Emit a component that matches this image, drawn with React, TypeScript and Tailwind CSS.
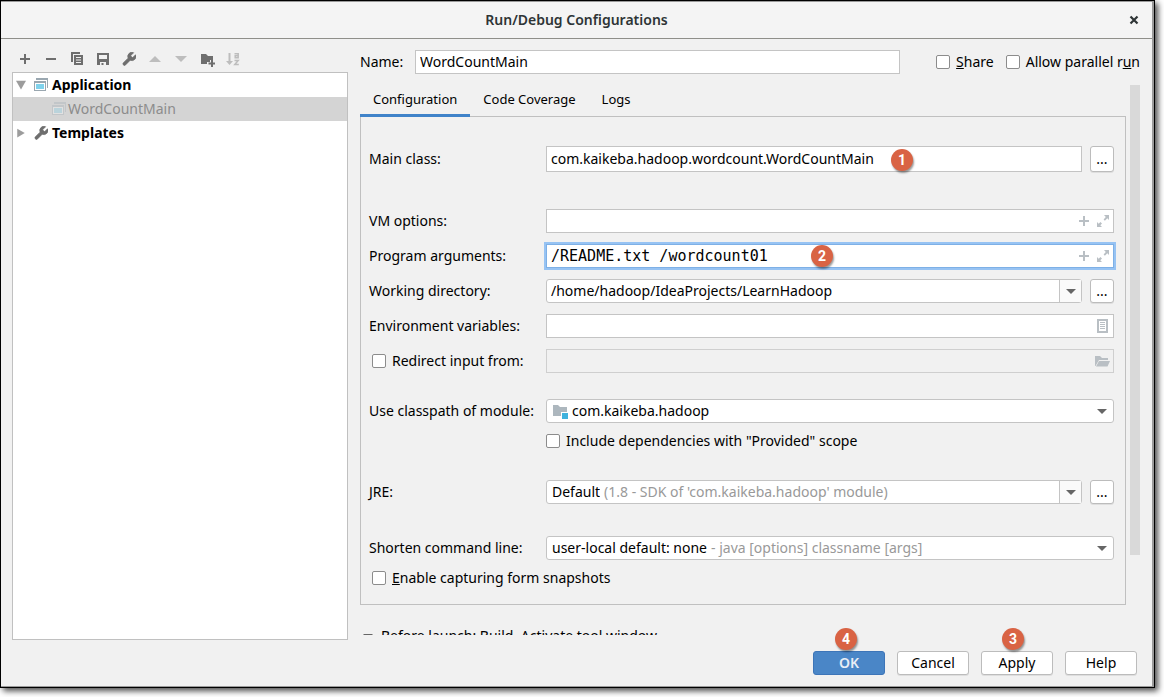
import type { ReactNode } from "react";

const inputBox = "border border-[#c4c4c4] bg-white";

function Svg({ children, className = "size-4" }: { children: ReactNode; className?: string }) {
  return (
    <svg viewBox="0 0 16 16" aria-hidden="true" className={`shrink-0 ${className}`} fill="currentColor">
      {children}
    </svg>
  );
}

const PlusIcon = ({ className = "size-4" }: { className?: string }) => (
  <Svg className={className}>
    <path d="M7 3h2v4h4v2H9v4H7V9H3V7h4z" />
  </Svg>
);

const Wrench = () => (
  <svg viewBox="1.5 1.5 20.5 20.5" aria-hidden="true" className="size-4 shrink-0 p-px text-[#6e6e6e]" fill="currentColor">
    <path d="M14.7 6.3a1 1 0 0 0 0 1.4l1.6 1.6a1 1 0 0 0 1.4 0l3.77-3.77a6 6 0 0 1-7.94 7.94l-6.91 6.91a2.12 2.12 0 0 1-3-3l6.91-6.91a6 6 0 0 1 7.94-7.94l-3.76 3.76z" stroke="currentColor" strokeWidth="1.2" />
  </svg>
);

const ExpandIcon = () => (
  <Svg className="size-4 text-[#b9bfc4]">
    <path d="M9 2h5v5l-1.700-1.700-2.400 2.400-1.300-1.300 2.200-2.400z M2 9v5h5l-1.700-1.700 1.700-1.700L5.400 9 3.700 10.700z" />
  </Svg>
);

const AppIcon = ({ faded = false }: { faded?: boolean }) => (
  <Svg className={faded ? "size-4 opacity-30" : "size-4"}>
    <path d="M3 1h12v10h-1V3H3z" fill="#9aa7b0" />
    <path d="M1 4h12v10H1zM2 6v7h10V6z" fill="#9aa7b0" fillRule="evenodd" />
    <path d="M2 6h10v7H2z" fill="#fff" />
    <path d="M3 7h8v5H3z" fill="#7fd2ec" />
  </Svg>
);

function Badge({ n, className }: { n: number; className: string }) {
  return (
    <span
      className={`pointer-events-none absolute z-10 flex size-[22px] items-center justify-center rounded-full bg-[#d96344] font-[Roboto,sans-serif] text-sm font-bold text-white shadow-[1px_2px_2px_rgba(0,0,0,0.4)] ${className}`}
    >
      {n}
    </span>
  );
}

function Check({ id, children }: { id: string; children: ReactNode }) {
  return (
    <div className="flex items-center gap-1.5">
      <input
        id={id}
        type="checkbox"
        className="size-3.5 shrink-0 appearance-none rounded-xs border border-[#8c8c8c] bg-white checked:bg-[#4a86c7]"
      />
      <label htmlFor={id}>{children}</label>
    </div>
  );
}

function Row({ id, label, className = "", children }: { id: string; label: ReactNode; className?: string; children: ReactNode }) {
  return (
    <div className={`flex items-center ${className}`}>
      <div className="w-[177px] shrink-0 whitespace-nowrap">
        {typeof label === "string" ? <label htmlFor={id}>{label}</label> : label}
      </div>
      <div className="flex min-w-0 flex-1 items-stretch gap-2">{children}</div>
    </div>
  );
}

function Browse({ label }: { label: string }) {
  return (
    <button
      type="button"
      aria-label={label}
      className="w-6 shrink-0 rounded-[3px] border border-[#bcbcbc] bg-white shadow-[0_1px_0_rgba(0,0,0,0.08)]"
    >
      ...
    </button>
  );
}

const Caret = () => (
  <svg viewBox="0 0 10 5" aria-hidden="true" className="h-[5px] w-2.5 shrink-0" fill="#666">
    <path d="M0 0h10L5 5z" />
  </svg>
);

function ArgInput({ id, value, focused = false }: { id: string; value?: string; focused?: boolean }) {
  return (
    <div
      className={`relative flex h-6 flex-1 items-center gap-[3px] border pr-0.5 pl-1 bg-white ${
        focused ? "border-[#7eb0e6] outline-2 outline-[#97c3f3]" : "border-[#c4c4c4]"
      }`}
    >
      <input id={id} defaultValue={value} className="min-w-0 flex-1 font-[DejaVu_Sans_Mono,monospace] text-[15px] outline-none" />
      <button type="button" aria-label="Insert macro"><PlusIcon className="size-4 text-[#b9bfc4]" /></button>
      <button type="button" aria-label="Expand"><ExpandIcon /></button>
      {focused && <Badge n={2} className="top-0 left-[264px]" />}
    </div>
  );
}

function Choice({ id, main, note, icon, split = false }: { id: string; main: string; note?: string; icon?: ReactNode; split?: boolean }) {
  return (
    <div className="flex h-6 min-w-0 flex-1 items-stretch rounded-[3px] border border-[#c4c4c4] bg-white">
      <div className="flex min-w-0 flex-1 items-center gap-1 pl-[5px]">
        {icon}
        <select id={id} className="appearance-none [field-sizing:content]">
          <option>{main}</option>
        </select>
        {note && <span className="whitespace-nowrap text-[#999]">{note}</span>}
      </div>
      <div className={`flex w-[22px] items-center justify-center ${split ? "border-l border-[#c4c4c4] bg-[#fafafa]" : ""}`}>
        <Caret />
      </div>
    </div>
  );
}

function Toolbar() {
  const tools: { name: string; off?: boolean; icon: ReactNode }[] = [
    { name: "Add", icon: <PlusIcon /> },
    { name: "Remove", icon: <Svg><path d="M3 7h10v2H3z" /></Svg> },
    {
      name: "Copy",
      icon: (
        <Svg>
          <path d="M2 1h9v2H4v8H2z" />
          <path fillRule="evenodd" d="M5 4h9v10H5zM7 6v1h5V6zM7 8.500v1h5v-1zM7 11v1h5v-1z" />
        </Svg>
      ),
    },
    { name: "Save", icon: <Svg><path fillRule="evenodd" d="M2 2h12v12H2zM4 4v4h8V4zM5 11v3h1.500v-2h2v2H11v-3z" /></Svg> },
    { name: "Edit templates", icon: <Wrench /> },
    { name: "Move up", off: true, icon: <Svg><path d="M2 11h12L8 5z" /></Svg> },
    { name: "Move down", off: true, icon: <Svg><path d="M2 5h12l-6 6z" /></Svg> },
    {
      name: "New folder",
      icon: (
        <Svg>
          <path d="M2 3h5l2 2h5v4h-3v2H8v2H2z" />
          <path d="M12 9h2v2.500h2v2h-2V16h-2v-2.500H9.500v-2H12z" />
        </Svg>
      ),
    },
    {
      name: "Sort",
      off: true,
      icon: (
        <Svg>
          <path d="M3.500 2h2v8H8l-3.500 4L1 10h2.500z" />
          <path d="M9.500 2.700h3.700v4.100h-3v-2.100h3M9.500 9.500h3.700l-3.400 4h4" fill="none" stroke="currentColor" strokeWidth="1.500" />
        </Svg>
      ),
    },
  ];
  return (
    <div className="flex h-[21px] items-start gap-2.5 pl-[5px]">
      {tools.map((t) => (
        <button key={t.name} type="button" aria-label={t.name} disabled={t.off} className={t.off ? "text-[#bdbdbd]" : "text-[#6e6e6e]"}>
          {t.icon}
        </button>
      ))}
    </div>
  );
}

function Tree() {
  return (
    <ul role="tree" aria-label="Configurations" className="flex-1 border border-[#c0c0c0] bg-white">
      <li role="treeitem" className="flex h-6 items-center gap-1 pl-[3px] font-bold">
        <Svg className="size-2.5 text-[#9c9c9c]"><path d="M0 1h16L8 15z" /></Svg>
        <span className="pl-[3px]"><AppIcon /></span>
        <span className="-ml-px">Application</span>
      </li>
      <li role="treeitem" aria-selected="true" className="flex h-6 items-center gap-px bg-[#d4d4d4] pl-[38px] text-[#8c8c8c]">
        <AppIcon faded />
        <span>WordCountMain</span>
      </li>
      <li role="treeitem" className="flex h-6 items-center gap-1 pl-[3px] font-bold">
        <Svg className="size-2.5 text-[#9c9c9c]"><path d="M2 1v14l12-7z" /></Svg>
        <span className="pl-[3px]"><Wrench /></span>
        <span className="-ml-px">Templates</span>
      </li>
    </ul>
  );
}

function ConfigurationForm() {
  return (
    <div className="border border-[#c0c0c0] pt-[29px] pr-[11px] pb-4 pl-2">
      <Row id="main-class" label="Main class:">
        <div className="relative flex flex-1">
          <input id="main-class" defaultValue="com.kaikeba.hadoop.wordcount.WordCountMain" className={`h-[26px] min-w-0 flex-1 px-1 pb-0.5 ${inputBox}`} />
          <Badge n={1} className="top-[3px] left-[345px]" />
        </div>
        <Browse label="Browse main class" />
      </Row>
      <Row id="vm" label="VM options:" className="mt-[37px]"><ArgInput id="vm" /></Row>
      <Row id="args" label="Program arguments:" className="mt-[11px]">
        <ArgInput id="args" value="/README.txt /wordcount01" focused />
      </Row>
      <Row id="dir" label="Working directory:" className="mt-[11px]">
        <div className="flex h-6 flex-1 rounded-[3px] border border-[#c4c4c4] bg-white">
          <input id="dir" defaultValue="/home/hadoop/IdeaProjects/LearnHadoop" className="min-w-0 flex-1 px-1" />
          <button type="button" aria-label="Recent directories" className="flex w-[22px] items-center justify-center border-l border-[#c4c4c4] bg-[#fafafa]">
            <Caret />
          </button>
        </div>
        <Browse label="Browse directory" />
      </Row>
      <Row id="env" label="Environment variables:" className="mt-[11px]">
        <div className={`flex h-6 flex-1 items-center px-[3px] ${inputBox}`}>
          <input id="env" className="min-w-0 flex-1" />
          <button type="button" aria-label="Edit variables">
            <Svg className="size-4 text-[#b9bfc4]">
              <path fillRule="evenodd" d="M3 1h11v14H3zM5 3v10h7V3z" />
              <path d="M6 4h5v1H6zM6 6h5v1H6zM6 8h5v1H6zM6 10h5v1H6z" />
            </Svg>
          </button>
        </div>
      </Row>
      <Row id="redirect-path" label={<div className="pl-[3px]"><Check id="redirect">Redirect input from:</Check></div>} className="mt-[11px]">
        <div className="flex h-6 flex-1 items-center border border-[#cfcfcf] px-[3px]">
          <input id="redirect-path" aria-label="Input file" disabled className="min-w-0 flex-1" />
          <button type="button" aria-label="Browse input file" disabled>
            <Svg className="size-4 text-[#b9bfc4]"><path d="M1 3h5l2 2h6v2H5l-3.500 6H1z" /><path d="M5 8h11l-2.500 5.500H2z" /></Svg>
          </button>
        </div>
      </Row>
      <Row id="module" label="Use classpath of module:" className="mt-[26px]">
        <Choice
          id="module"
          main="com.kaikeba.hadoop"
          icon={
            <Svg>
              <path d="M1 2h5l2 2h7v5H9v4H1z" fill="#adb7be" />
              <path d="M10 10h6v6h-6z" fill="#3fb2dd" />
            </Svg>
          }
        />
      </Row>
      <div className="mt-2 pl-[177px]">
        <Check id="provided">Include dependencies with "Provided" scope</Check>
      </div>
      <Row id="jre" label="JRE:" className="mt-[29px]">
        <Choice id="jre" main="Default" note="(1.8 - SDK of 'com.kaikeba.hadoop' module)" split />
        <Browse label="Browse JRE" />
      </Row>
      <Row id="shorten" label="Shorten command line:" className="mt-8">
        <Choice id="shorten" main="user-local default: none" note="- java [options] classname [args]" />
      </Row>
      <div className="mt-2 pl-[3px]">
        <Check id="snapshots"><u>E</u>nable capturing form snapshots</Check>
      </div>
    </div>
  );
}

export default function App() {
  const button = "relative h-6 w-[72px] rounded-[3px] border";
  const plain = "border-[#bcbcbc] bg-white shadow-[0_1px_0_rgba(0,0,0,0.08)]";
  return (
    <div className="flex h-screen bg-white pr-[9px] pb-[9px] font-[Noto_Sans,sans-serif] text-sm leading-5 text-black">
      <main className="flex min-w-0 flex-1 flex-col border border-black bg-[#f1f1f1] shadow-[3px_3px_6px_rgba(0,0,0,0.7)]">
        <div className="flex min-h-0 flex-1 flex-col border-t border-r-2 border-b border-[#9a9a9a]">
          <header className="flex h-[37px] shrink-0 items-center border-b border-b-[#8f8f8a] bg-[#f4f4f4] px-2.5 text-[#2e3436]">
            <span className="w-4" />
            <h1 className="flex-1 text-center font-semibold">Run/Debug Configurations</h1>
            <button type="button" aria-label="Close">
              <svg viewBox="0 0 16 16" className="size-4" fill="none" stroke="#2e3436" strokeWidth="2.200">
                <path d="M4.500 4.500l7 7M11.500 4.500l-7 7" />
              </svg>
            </button>
          </header>
          <div className="flex min-h-0 flex-1 gap-3 pt-3 pr-3 pl-[11px]">
            <aside className="flex w-[336px] shrink-0 flex-col">
              <Toolbar />
              <Tree />
            </aside>
            <section className="-mt-px flex min-w-0 flex-1 flex-col pb-[5px]">
              <div className="flex h-6 shrink-0 items-center">
                <label htmlFor="name" className="w-[55px]">Name:</label>
                <input id="name" defaultValue="WordCountMain" className={`h-6 min-w-0 flex-1 px-1 pb-px ${inputBox}`} />
                <div className="flex gap-3 pl-9 whitespace-nowrap">
                  <Check id="share"><u>S</u>hare</Check>
                  <Check id="parallel">Allow parallel r<u>u</u>n</Check>
                </div>
              </div>
              <div className="mt-[11px] flex min-h-0 flex-1 gap-1 overflow-hidden">
                <div className="min-w-0 flex-1">
                  <div role="tablist" className="relative -mb-px flex h-8 text-[13px]">
                    <button type="button" role="tab" aria-selected="true" className="border-b-3 border-[#4083c9] px-[13px] pb-0.5">Configuration</button>
                    <button type="button" role="tab" className="border-b-3 border-transparent px-[13px] pb-0.5">Code Coverage</button>
                    <button type="button" role="tab" className="border-b-3 border-transparent px-[13px] pb-0.5">Logs</button>
                  </div>
                  <ConfigurationForm />
                  <div className="mt-[21px] flex items-center gap-2 pl-[3px]">
                    <Caret />
                    <span>Before launch: Build, Activate tool window</span>
                  </div>
                </div>
                <div className="h-[470px] w-2.5 shrink-0 bg-[#d9d9d9]" />
              </div>
            </section>
          </div>
          <footer className="flex shrink-0 justify-end gap-3 pt-[11px] pr-[15px] pb-[11px]">
            <button type="button" className={`${button} border-[#3d75b8] bg-[#4a86c7] font-semibold text-[#e8eef6]`}>
              OK<Badge n={4} className="-top-6 left-[21px]" />
            </button>
            <button type="button" className={`${button} ${plain}`}>Cancel</button>
            <button type="button" className={`${button} ${plain}`}>
              Apply<Badge n={3} className="-top-6 left-[20px]" />
            </button>
            <button type="button" className={`${button} ${plain}`}>Help</button>
          </footer>
        </div>
      </main>
    </div>
  );
}
